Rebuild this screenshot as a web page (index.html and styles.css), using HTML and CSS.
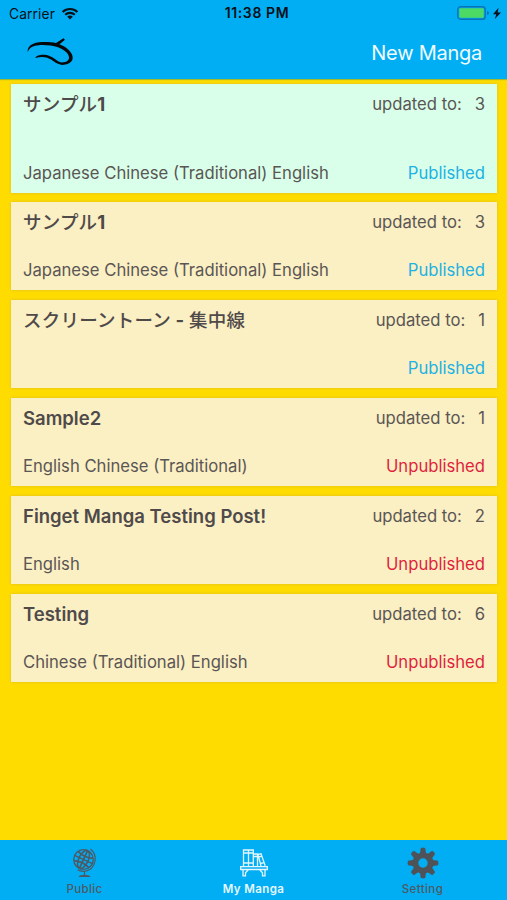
FILE: index.html
```html
<!DOCTYPE html>
<html lang="en">
<head>
<meta charset="utf-8">
<title>My Manga</title>
<link rel="stylesheet" href="styles.css">
</head>
<body>
<div class="app">
  <header class="header">
    <div class="status">
      <div class="carrier"><span>Carrier</span>
        <svg class="wifi" viewBox="0 0 18 13"><path d="M1.6 5a10.6 10.6 0 0 1 14.8 0M4.2 7.8a6.9 6.9 0 0 1 9.6 0" fill="none" stroke="#081018" stroke-width="2.1"/><path d="M6.2 9.8a4 4 0 0 1 5.6 0L9 12.6z" fill="#081018"/></svg>
      </div>
      <div class="time">11:38 PM</div>
      <div class="power">
        <svg class="battery" viewBox="0 0 32 15"><rect x=".8" y=".8" width="27.4" height="12.4" rx="2.8" fill="none" stroke="#0873b4" stroke-width="1.4"/><rect x="2.3" y="2.3" width="24.4" height="9.4" rx="1" fill="#4cd964"/><path d="M30 5q2 .5 2 2t-2 2z" fill="#0873b4"/></svg>
        <svg class="bolt" viewBox="0 0 8 13"><path d="M5.6.8 0 7.2h3.3L1.8 12 8 5.4H4.6z" fill="#081018"/></svg>
      </div>
    </div>
    <nav class="nav">
      <svg class="logo" viewBox="0 0 48 30"><path d="M.8 14C0 10 3 5.300 12 4.300C18 3.700 24 4 29 5.100L36.500.3L38 1.700L32.500 6.300C40 9 46 15 45.700 20C45.300 25 40 26.500 35 27C30 26 27 23.500 24 21.500C19 18.500 14 18.300 8.300 20C9 17 17 15.500 23 18.200C28 20.300 31 24.300 35 24.400C39 24.300 42 23 42 19.500C42 15.500 37 11.500 31 9.300C24 7 14 6.500 8 7.800C4 8.800 2 11 .8 14Z" fill="#05080b"/></svg>
      <a class="new">New Manga</a>
    </nav>
  </header>
  <main class="list">
    <article class="card card--active">
      <div class="row"><h2 class="jp">サンプル<b>1</b></h2><p class="updated">updated to:<span>3</span></p></div>
      <div class="row"><p class="langs">Japanese Chinese (Traditional) English</p><p class="published">Published</p></div>
    </article>
    <article class="card">
      <div class="row"><h2 class="jp">サンプル<b>1</b></h2><p class="updated">updated to:<span>3</span></p></div>
      <div class="row"><p class="langs">Japanese Chinese (Traditional) English</p><p class="published">Published</p></div>
    </article>
    <article class="card">
      <div class="row"><h2 class="jp">スクリーントーン<b> - </b>集中線</h2><p class="updated">updated to:<span>1</span></p></div>
      <div class="row"><p class="langs"></p><p class="published">Published</p></div>
    </article>
    <article class="card">
      <div class="row"><h2>Sample2</h2><p class="updated">updated to:<span>1</span></p></div>
      <div class="row"><p class="langs">English Chinese (Traditional)</p><p class="unpublished">Unpublished</p></div>
    </article>
    <article class="card">
      <div class="row"><h2>Finget Manga Testing Post!</h2><p class="updated">updated to:<span>2</span></p></div>
      <div class="row"><p class="langs">English</p><p class="unpublished">Unpublished</p></div>
    </article>
    <article class="card">
      <div class="row"><h2>Testing</h2><p class="updated">updated to:<span>6</span></p></div>
      <div class="row"><p class="langs">Chinese (Traditional) English</p><p class="unpublished">Unpublished</p></div>
    </article>
  </main>
  <footer class="tabs">
    <a class="tab">
      <svg viewBox="0 0 32 32"><g fill="none" stroke="#4d5963"><circle cx="14.500" cy="12.500" r="9.800" stroke-width="1.300"/><g stroke-width="1.600" transform="rotate(25 14.500 12.500)"><ellipse cx="14.500" cy="12.500" rx="4.800" ry="9.800"/><path d="M14.500 2.700v19.600M4.700 12.500h19.600M6.500 7.500q8 3 16 0M6.500 17.500q8-3 16 0"/></g><path d="M21.500 2q5.500 4.500 4.600 11.500Q24.500 23.500 15 24.300q-3.500.2-6.500-1.500M15.500 24.300v4" stroke-width="1.200"/></g><path d="M9.500 30q1-2.200 6-2.200t6 2.200z" fill="#4d5963"/></svg>
      <span>Public</span>
    </a>
    <a class="tab tab--on">
      <svg viewBox="0 0 32 32"><g fill="none" stroke="#e4f7ff" stroke-width="1.300"><path d="M5.500 19V3h5v16M10.500 3h4.800v16M5.500 6h9.500M5.500 16h9.500M15.300 7h4.200v12M15.300 9.500h4M20 7.500l3-.8 4.200 12M20 7.500l3 11.500M20.700 10l3-.8M22.500 16.500l3.500-.8"/><path d="M2.700 19.700h26.600v2.800H2.700zM5 22.500v6.300h2.500v-3l3-3.300M27 22.500v6.300h-2.500v-3l-3-3.300"/></g></svg>
      <span>My Manga</span>
    </a>
    <a class="tab">
      <svg viewBox="0 0 32 32"><g fill="#4d5358"><g id="teeth"><path id="t" d="M13 6 13.800 1q2.200-.8 4.400 0l.8 5v20l-.8 5q-2.200.8-4.400 0L13 26z"/><use href="#t" transform="rotate(45 16 16)"/></g><use href="#teeth" transform="rotate(90 16 16)"/><circle cx="16" cy="16" r="10.600"/></g><circle cx="16" cy="16" r="4.700" fill="#02aef3"/></svg>
      <span>Setting</span>
    </a>
  </footer>
</div>
</body>
</html>
```
FILE: styles.css
```css
* { box-sizing: border-box; }
body { margin: 0; font-family: Inter, "Noto Sans CJK JP", sans-serif; color: #5a5654; }
h2, p { margin: 0; }
.app { width: 507px; height: 900px; display: flex; flex-direction: column; background: #ffdc00; overflow: hidden; }
.header { height: 79px; flex: none; background: #02aef3; box-shadow: 0 1px 1px #a4b92c; }
.status { height: 27px; display: grid; grid-template-columns: 1fr auto 1fr; align-items: center; padding: 1px 6px 0 9px; color: #081018; font-size: 13.8px; }
.carrier { display: flex; align-items: center; gap: 6px; letter-spacing: .1px; }
.wifi { width: 18px; height: 13px; margin-top: -2px; }
.time { font-weight: 600; font-size: 14px; letter-spacing: .6px; line-height: 16px; margin: -2px -2px 0 2px; }
.power { display: flex; justify-content: flex-end; align-items: center; gap: 4px; margin-top: -1px; }
.battery { width: 32px; height: 15px; }
.bolt { width: 8px; height: 13px; }
.nav { height: 52px; display: flex; justify-content: space-between; align-items: center; padding: 0 25px 0 27px; }
.logo { width: 48px; height: 30px; }
.new { color: #f0fbff; font-size: 20px; letter-spacing: -.25px; }
.list { flex: 1; display: flex; flex-direction: column; gap: 9.8px; padding: 4.6px 10px 0 11px; }
.card { height: 88px; flex: none; display: flex; flex-direction: column; justify-content: space-between; padding: 9px 12px 7px; background: #fbefc4; box-shadow: 0 0 3px #d9bd28; }
.card--active { height: 109px; background: #d9ffea; }
.row { display: flex; justify-content: space-between; height: 24px; line-height: 23px; font-size: 16.65px; white-space: nowrap; }
h2 { font-size: 18.5px; font-weight: 600; line-height: 23.5px; color: #4f4a4a; }
.jp { font-weight: 500; letter-spacing: .22px; }
.jp b { font-weight: 700; }
.updated span { margin-left: 13px; }
.published { color: #20b2e3; }
.unpublished { color: #e01f3d; }
.tabs { height: 60px; flex: none; display: grid; grid-template-columns: repeat(3, 1fr); background: #02aef3; }
.tab { display: flex; flex-direction: column; align-items: center; padding-top: 7px; font-size: 11.5px; font-weight: 500; line-height: 14px; letter-spacing: .4px; color: #4d5963; }
.tab svg { width: 32px; height: 32px; margin-bottom: 3px; }
.tab--on { color: #e4f7ff; font-weight: 600; }
```
